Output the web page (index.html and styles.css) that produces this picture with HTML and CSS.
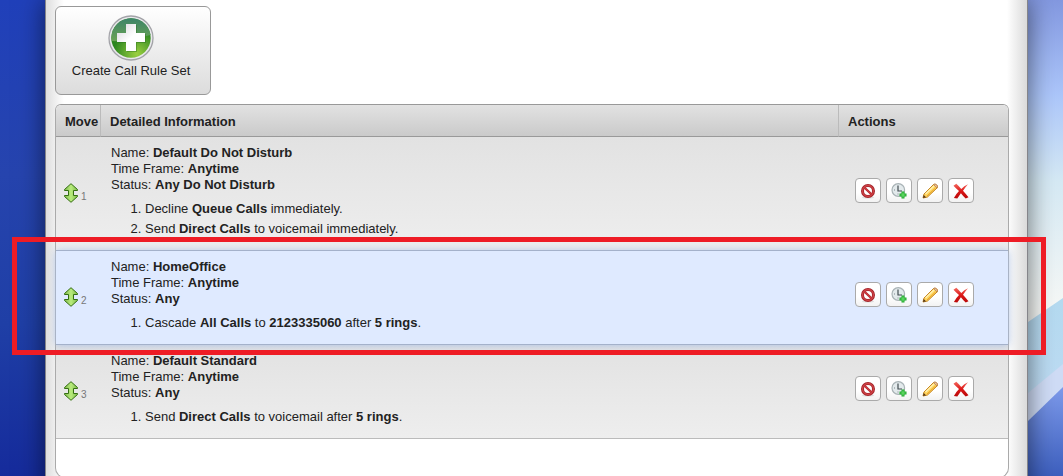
FILE: index.html
```html
<!DOCTYPE html>
<html lang="en">
<head>
<meta charset="utf-8">
<title>Call Rule Sets</title>
<link rel="stylesheet" href="styles.css">
</head>
<body>
<svg class="defs" aria-hidden="true">
  <defs>
    <linearGradient id="green" x1="0" y1="0" x2="0" y2="1"><stop offset="0" stop-color="#3c8468"/><stop offset="1" stop-color="#6aa354"/></linearGradient>
    <radialGradient id="lime" cx=".65" cy=".9" r=".6"><stop offset="0" stop-color="#9bd040"/><stop offset="1" stop-color="#2c861f"/></radialGradient>
    <linearGradient id="plus" x1="0" y1="0" x2="1" y2="1"><stop offset="0" stop-color="#d4d4d8"/><stop offset=".5" stop-color="#fff"/></linearGradient>
    <linearGradient id="arrow" x1="0" y1="0" x2="1" y2="0"><stop offset="0" stop-color="#7fb84e"/><stop offset=".5" stop-color="#b9ec7c"/><stop offset="1" stop-color="#7dbb48"/></linearGradient>
    <linearGradient id="red" x1="0" y1="0" x2="0" y2="1"><stop offset="0" stop-color="#f4695f"/><stop offset=".5" stop-color="#dc1818"/><stop offset="1" stop-color="#b80808"/></linearGradient>
    <symbol id="i-move" viewBox="0 0 14 20"><path d="M7 .7 13.500 6.500V7.500H9.500v5h4v1L7 19.300.5 13.500v-1h4v-5h-4v-1z" fill="url(#arrow)" stroke="#356f12"/></symbol>
    <symbol id="i-block" viewBox="0 0 16 16"><ellipse cx="8" cy="14.500" rx="6" ry="1" fill="#ddd"/><circle cx="8" cy="8" r="5.500" fill="#fff" stroke="#a3242a" stroke-width="3"/><path d="M4.300 4.500l7.400 7" stroke="#b1282e" stroke-width="2.400"/><circle cx="8" cy="8" r="5.500" fill="none" stroke="#d04347" stroke-width="1.300"/><path d="M4.300 4.500l7.400 7" stroke="#cc3c40" stroke-width="1.200"/></symbol>
    <symbol id="i-clock" viewBox="0 0 16 16"><circle cx="7.300" cy="7" r="6.300" fill="#e3eaec" stroke="#a9b3b6" stroke-width="1.200"/><path d="M7 2.500V8H11" fill="none" stroke="#414b50" stroke-width="1.200"/><path d="M3 7h1M7 11.500v-1" stroke="#7f898d"/><path d="M10.500 8.500h3v2h2v3h-2v2h-3v-2h-2v-3h2z" fill="#20a72d"/><path d="M12 9.500v5M9.500 12h5" stroke="#68df6a" stroke-width="1.200"/></symbol>
    <symbol id="i-pencil" viewBox="0 0 16 16"><path d="M1 15 2 11 11.500 1.500Q13 .5 14.700 2T15 5L5.500 14z" fill="#ffd45c" stroke="#c58420"/><path d="M3.500 11 12 3" stroke="#fff0b0" stroke-width="1.500"/><path d="M5 13 13.500 5" stroke="#e9a62b"/><path d="m11.500 1.500 3.700 3.500Q16 3 14.500 1.700T11.500 1.500z" fill="#f1c4a7" stroke="#ae7945" stroke-width=".7"/><path d="M1 15l.7-3L4 14.200z" fill="#51361c"/></symbol>
    <symbol id="i-delete" viewBox="0 0 16 16"><path d="M.5 2.700 3.300.8Q6 3.200 8.300 6 11 2.600 15 1.200 12.300 4.200 10 7.800 13 11.200 15.500 14.300L12.700 15.500Q10 13 7.900 10.200 6 13 4.300 15.500L.9 15Q3 11 6 8 3 5.400.5 2.700z" fill="url(#red)"/></symbol>
  </defs>
</svg>
<div class="page">
  <div class="side side-left"></div>
  <main class="panel">
    <button class="create" type="button">
      <svg class="create-icon" viewBox="0 0 46 46" aria-hidden="true">
        <circle cx="23" cy="23" r="22" fill="#e9e9ec" stroke="#a3a3a8" stroke-width="1.300"/>
        <circle cx="23" cy="23" r="19.700" fill="url(#lime)"/>
        <path d="M3.600 26A19.700 19.700 0 1 1 42.600 20Q36 21 30 24T3.600 26z" fill="url(#green)"/>
        <path d="M18 9h10v9h9v9h-9v9H18v-9H9v-9h9z" fill="#256c1c" opacity=".4" transform="translate(1 1)"/>
        <path d="M18 9h10v9h9v9h-9v9H18v-9H9v-9h9z" fill="url(#plus)"/>
      </svg>
      <span>Create Call Rule Set</span>
    </button>
    <div class="box">
      <table class="rules">
        <colgroup><col class="c-move"><col><col class="c-actions"></colgroup>
        <thead>
          <tr><th scope="col">Move</th><th scope="col">Detailed Information</th><th scope="col">Actions</th></tr>
        </thead>
        <tbody>
          <tr>
            <td class="move"><div class="handle"><svg aria-hidden="true"><use href="#i-move"/></svg><span>1</span></div></td>
            <td class="info">
              <div>Name: <b>Default Do Not Disturb</b></div>
              <div>Time Frame: <b>Anytime</b></div>
              <div>Status: <b>Any Do Not Disturb</b></div>
              <ol><li>Decline <b>Queue Calls</b> immediately.</li><li>Send <b>Direct Calls</b> to voicemail immediately.</li></ol>
            </td>
            <td class="actions"><div class="tools">
              <button type="button" aria-label="Disable"><svg><use href="#i-block"/></svg></button>
              <button type="button" aria-label="Add time frame"><svg><use href="#i-clock"/></svg></button>
              <button type="button" aria-label="Edit"><svg><use href="#i-pencil"/></svg></button>
              <button type="button" aria-label="Delete"><svg><use href="#i-delete"/></svg></button>
            </div></td>
          </tr>
          <tr class="selected">
            <td class="move"><div class="handle"><svg aria-hidden="true"><use href="#i-move"/></svg><span>2</span></div></td>
            <td class="info">
              <div>Name: <b>HomeOffice</b></div>
              <div>Time Frame: <b>Anytime</b></div>
              <div>Status: <b>Any</b></div>
              <ol><li>Cascade <b>All Calls</b> to <b>2123335060</b> after <b>5 rings</b>.</li></ol>
            </td>
            <td class="actions"><div class="tools">
              <button type="button" aria-label="Disable"><svg><use href="#i-block"/></svg></button>
              <button type="button" aria-label="Add time frame"><svg><use href="#i-clock"/></svg></button>
              <button type="button" aria-label="Edit"><svg><use href="#i-pencil"/></svg></button>
              <button type="button" aria-label="Delete"><svg><use href="#i-delete"/></svg></button>
            </div></td>
          </tr>
          <tr>
            <td class="move"><div class="handle"><svg aria-hidden="true"><use href="#i-move"/></svg><span>3</span></div></td>
            <td class="info">
              <div>Name: <b>Default Standard</b></div>
              <div>Time Frame: <b>Anytime</b></div>
              <div>Status: <b>Any</b></div>
              <ol><li>Send <b>Direct Calls</b> to voicemail after <b>5 rings</b>.</li></ol>
            </td>
            <td class="actions"><div class="tools">
              <button type="button" aria-label="Disable"><svg><use href="#i-block"/></svg></button>
              <button type="button" aria-label="Add time frame"><svg><use href="#i-clock"/></svg></button>
              <button type="button" aria-label="Edit"><svg><use href="#i-pencil"/></svg></button>
              <button type="button" aria-label="Delete"><svg><use href="#i-delete"/></svg></button>
            </div></td>
          </tr>
        </tbody>
      </table>
      <div class="box-foot"></div>
    </div>
  </main>
  <div class="side side-right">
    <svg viewBox="0 0 35 476" preserveAspectRatio="none" aria-hidden="true">
      <defs>
        <linearGradient id="sky" x1="0" y1="0" x2="0" y2="1"><stop offset="0" stop-color="#8398e0"/><stop offset=".2" stop-color="#acc6fa"/><stop offset=".38" stop-color="#d5e9f4"/><stop offset=".65" stop-color="#f6f8f6"/></linearGradient>
        <linearGradient id="beam" x1="0" y1="0" x2="0" y2="1"><stop offset="0" stop-color="#b4daf0"/><stop offset="1" stop-color="#c5dcf6"/></linearGradient>
        <linearGradient id="deep" x1="0" y1="0" x2="0" y2="1"><stop offset="0" stop-color="#7d9aea"/><stop offset="1" stop-color="#3d5fbe"/></linearGradient>
      </defs>
      <rect width="35" height="476" fill="url(#sky)"/>
      <path d="M0 322 35 298V476H0z" fill="url(#beam)"/>
      <path d="M0 393 35 364V476H0z" fill="#cfdcf6"/>
      <path d="M0 421 35 387V476H0z" fill="url(#deep)"/>
    </svg>
  </div>
</div>
</body>
</html>
```
FILE: styles.css
```css
* { box-sizing: border-box; }

html, body { height: 100%; }

body {
  margin: 0;
  overflow: hidden;
  color: #222;
  font: 13px/16px "Liberation Sans", Arial, sans-serif;
}

.defs { position: absolute; width: 0; height: 0; }

.page {
  display: grid;
  grid-template-columns: 45px minmax(0, 1fr) 35px;
  min-height: 100%;
}

.side-left { background: linear-gradient(#2040ba, #2644ae 35%, #1f3fa6 65%, #14289a); }

.side-right svg { display: block; width: 100%; height: 100vh; }

.panel {
  position: relative;
  padding: 6px 18px 20px 9px;
  border: solid #85858a;
  border-width: 0 1px;
  background: linear-gradient(90deg, #dedede, #fff 18px, #fff calc(100% - 20px), #dadada);
  box-shadow: 0 0 24px rgba(0, 0, 0, .55);
}

.create {
  display: flex;
  flex-direction: column;
  align-items: center;
  gap: 2px;
  width: 156px;
  height: 89px;
  padding: 8px 12px 6px 8px;
  border: 1px solid #999;
  border-radius: 6px;
  background: linear-gradient(#fff, #dcdcdc);
  color: #222;
  font: inherit;
  white-space: nowrap;
}

.create-icon { width: 46px; height: 46px; }

.box {
  margin-top: 9px;
  border: 1px solid #aaa;
  border-top-color: #999;
  border-radius: 6px 6px 10px 10px;
  background: #fff;
}

.box-foot { height: 38px; }

.rules {
  width: 100%;
  table-layout: fixed;
  border-spacing: 0;
}

.c-move { width: 45px; }
.c-actions { width: 169px; }

.rules th {
  height: 32px;
  padding: 2px 0 0 9px;
  border-right: 1px solid #bbb;
  border-bottom: 1px solid #999;
  background: linear-gradient(#e2e2e2, #cacaca);
  text-align: left;
  white-space: nowrap;
}

.rules th:first-child { border-top-left-radius: 5px; }
.rules th:last-child { border-right: 0; border-top-right-radius: 5px; }

.rules td {
  padding: 0;
  border-bottom: 1px solid #bbb;
  vertical-align: middle;
}

.rules tbody tr { background: linear-gradient(#e2e2e2, #eee); }

.rules tbody .selected {
  position: relative;
  z-index: 1;
  background: #dfeaff;
  box-shadow: 0 -1px #a4b1ca, 0 0 8px #a9bfe6;
}

.rules .selected td { border-color: #a4b1ca; }

/* Callout frame around the selected rule */
.selected .actions::after {
  content: "";
  position: absolute;
  inset: -14px -38px -10px -44px;
  border: 5px solid #ee1c25;
  pointer-events: none;
}

.rules .info { padding: 8px 10px 11px; }

.info ol { margin: 6px 0 0; padding: 0 0 0 34px; }
.info li { line-height: 20px; }

.rules .move { padding-bottom: 2px; }

.handle {
  display: flex;
  align-items: flex-end;
  gap: 3px;
  padding-left: 8px;
}

.handle svg { width: 14px; height: 20px; }
.handle span { color: #777; font-size: 10px; line-height: 12px; }

.rules .actions { padding: 0 0 6px 16px; }

.tools { display: flex; gap: 5px; }

.tools button {
  display: grid;
  place-items: center;
  width: 26px;
  height: 25px;
  padding: 0;
  border: 1px solid #aaa;
  border-radius: 4px;
  background: linear-gradient(#fff 60%, #f2f2f2);
}

.tools svg { width: 16px; height: 16px; }
```
